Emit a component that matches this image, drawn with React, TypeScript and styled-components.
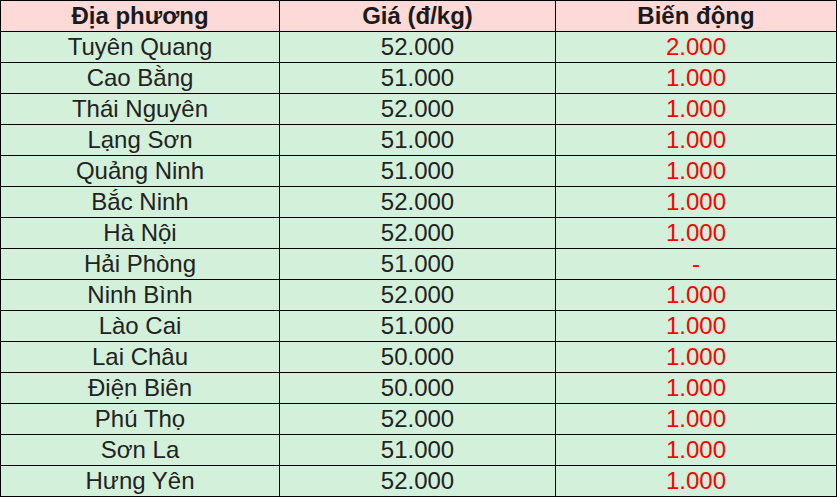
import { createGlobalStyle, styled } from "styled-components";

const GlobalStyle = createGlobalStyle`
  html, body {
    margin: 0;
    padding: 0;
    background: #fff;
  }
`;

const Table = styled.table`
  border-collapse: collapse;
  table-layout: fixed;
  width: 836px;
  font-family: "Liberation Sans", Arial, sans-serif;
  font-size: 24px;
`;

const HeadCell = styled.th`
  height: 30px;
  padding: 0;
  border: 1px solid #000;
  background: #fdd9d7;
  color: #1a1a1a;
  font-weight: 700;
  text-align: center;
  vertical-align: middle;
  line-height: 30px;
  white-space: nowrap;
`;

const Cell = styled.td<{ $red?: boolean }>`
  height: 30px;
  padding: 0;
  border: 1px solid #000;
  background: #d3f0da;
  color: ${(p) => (p.$red ? "#ff0000" : "#222")};
  text-align: center;
  vertical-align: middle;
  line-height: 30px;
  white-space: nowrap;
`;

const rows: [string, string, string][] = [
  ["Tuyên Quang", "52.000", "2.000"],
  ["Cao Bằng", "51.000", "1.000"],
  ["Thái Nguyên", "52.000", "1.000"],
  ["Lạng Sơn", "51.000", "1.000"],
  ["Quảng Ninh", "51.000", "1.000"],
  ["Bắc Ninh", "52.000", "1.000"],
  ["Hà Nội", "52.000", "1.000"],
  ["Hải Phòng", "51.000", "-"],
  ["Ninh Bình", "52.000", "1.000"],
  ["Lào Cai", "51.000", "1.000"],
  ["Lai Châu", "50.000", "1.000"],
  ["Điện Biên", "50.000", "1.000"],
  ["Phú Thọ", "52.000", "1.000"],
  ["Sơn La", "51.000", "1.000"],
  ["Hưng Yên", "52.000", "1.000"],
];

export default function App() {
  return (
    <>
      <GlobalStyle />
      <Table>
        <colgroup>
          <col style={{ width: 279 }} />
          <col style={{ width: 276 }} />
          <col style={{ width: 281 }} />
        </colgroup>
        <thead>
          <tr>
            <HeadCell>Địa phương</HeadCell>
            <HeadCell>Giá (đ/kg)</HeadCell>
            <HeadCell>Biến động</HeadCell>
          </tr>
        </thead>
        <tbody>
          {rows.map(([place, price, change]) => (
            <tr key={place}>
              <Cell>{place}</Cell>
              <Cell>{price}</Cell>
              <Cell $red>{change}</Cell>
            </tr>
          ))}
        </tbody>
      </Table>
    </>
  );
}
